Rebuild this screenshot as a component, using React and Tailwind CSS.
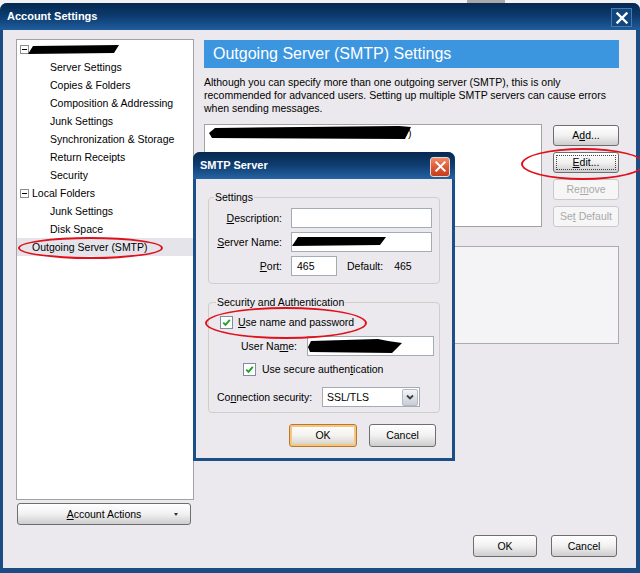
import React from "react"

const treeItems = [
  { label: "Server Settings", level: 2 },
  { label: "Copies & Folders", level: 2 },
  { label: "Composition & Addressing", level: 2 },
  { label: "Junk Settings", level: 2 },
  { label: "Synchronization & Storage", level: 2 },
  { label: "Return Receipts", level: 2 },
  { label: "Security", level: 2 },
  { label: "Local Folders", level: 1, expander: true },
  { label: "Junk Settings", level: 2 },
  { label: "Disk Space", level: 2 },
  { label: "Outgoing Server (SMTP)", level: 1, selected: true },
]

function Minus() {
  return (
    <span className="flex h-[9px] w-[9px] items-center justify-center border border-[#8e8e8e] bg-white">
      <span className="h-px w-[5px] bg-black" />
    </span>
  )
}

function XpButton({ children, className = "", disabled, focused, primary }) {
  let look = "border-[#6e6e6e] bg-gradient-to-b from-white via-[#f1f1f1] to-[#cdcdcd] text-black"
  if (disabled) look = "border-[#cacaca] bg-[#f6f6f6] text-[#a9a9a9]"
  if (primary) look = "border-[#b5782e] bg-gradient-to-b from-white via-[#f3f2ee] to-[#d3d0c6] text-black shadow-[inset_0_0_0_2px_#f6c57e]"
  return (
    <button type="button" className={`relative flex items-center justify-center rounded-[3px] border ${look} ${className}`}>
      {focused && <span className="absolute inset-[2px] border border-dotted border-[#444]" />}
      <span>{children}</span>
    </button>
  )
}

function Field({ className = "", children }) {
  return (
    <div className={`relative h-[20px] border border-[#a3abb3] bg-white ${className}`}>{children}</div>
  )
}

function Check() {
  return (
    <span className="flex h-[13px] w-[13px] items-center justify-center border border-[#7f8e9c] bg-white">
      <svg width="9" height="9" viewBox="0 0 9 9">
        <path d="M1.2 4.6 L3.5 6.9 L7.8 1.8" fill="none" stroke="#21a32a" strokeWidth="1.9" />
      </svg>
    </span>
  )
}

function CloseX({ size = 12, width = 2.4 }) {
  return (
    <svg width={size} height={size} viewBox="0 0 12 12">
      <path d="M1.5 1.5 L10.5 10.5 M10.5 1.5 L1.5 10.5" stroke="#fff" strokeWidth={width} strokeLinecap="square" />
    </svg>
  )
}

function SmtpDialog() {
  return (
    <div className="absolute left-[193px] top-[152px] flex h-[309px] w-[262px] flex-col overflow-hidden rounded-t-[7px] bg-[#1a4f88]">
      <div className="flex h-[27px] items-center justify-between bg-gradient-to-b from-[#07294f] via-[#0f3e72] to-[#2564a3] pl-[7px] pr-[5px]">
        <span className="text-[11px] font-bold text-white">SMTP Server</span>
        <span className="mt-[2px] flex h-[20px] w-[20px] items-center justify-center rounded-[3px] border border-[#f0d6cc] bg-gradient-to-b from-[#f08a68] via-[#dd5a36] to-[#c23d1c]">
          <CloseX size={11} width={2.2} />
        </span>
      </div>
      <div className="flex-1 px-[3px] pb-[3px]">
        <div className="flex h-full flex-col bg-[#ebe9ed] px-[12px]">
          <fieldset className="mt-[12px] rounded-[4px] border border-[#cfcfc9] pb-[7px] pr-[5px]">
            <legend className="ml-[5px] px-[1px] leading-[13px]">Settings</legend>
            <div className="mt-[4px] flex h-[20px] items-center">
              <span className="w-[73px] text-right"><u>D</u>escription:</span>
              <Field className="ml-[9px] w-[141px]" />
            </div>
            <div className="mt-[4px] flex h-[20px] items-center">
              <span className="w-[73px] text-right"><u>S</u>erver Name:</span>
              <Field className="ml-[9px] w-[141px]">
                <svg className="absolute left-0 top-[4px]" width="94" height="10" viewBox="0 0 94 10">
                  <polygon points="6,0 94,0 88,8 0,9" fill="#000" />
                </svg>
              </Field>
            </div>
            <div className="mt-[4px] flex h-[20px] items-center">
              <span className="w-[73px] text-right"><u>P</u>ort:</span>
              <Field className="ml-[9px] flex w-[46px] items-center pl-[5px]">465</Field>
              <span className="ml-[10px]">Default:</span>
              <span className="ml-[11px]">465</span>
            </div>
          </fieldset>
          <fieldset className="mt-[12px] rounded-[4px] border border-[#cfcfc9] pb-[5px] pr-[5px]">
            <legend className="ml-[7px] px-[1px] leading-[13px]">Security and Authentication</legend>
            <div className="mt-[3px] flex h-[20px] items-center pl-[11px]">
              <Check />
              <span className="ml-[5px]"><u>U</u>se name and password</span>
            </div>
            <div className="mt-[4px] flex h-[20px] items-center pl-[32px]">
              <span>User Na<u>m</u>e:</span>
              <Field className="ml-auto w-[127px]">
                <svg className="absolute left-0 top-[1px]" width="94" height="16" viewBox="0 0 94 16">
                  <polygon points="3,3 70,1 80,3 94,5 84,15 2,14 0,9" fill="#000" />
                </svg>
              </Field>
            </div>
            <div className="mt-[3px] flex h-[20px] items-center pl-[34px]">
              <Check />
              <span className="ml-[6px]">Use secure authen<u>t</u>ication</span>
            </div>
            <div className="mt-[8px] flex h-[20px] items-center pl-[8px]">
              <span className="w-[105px] shrink-0">Co<u>n</u>nection security:</span>
              <div className="flex h-[20px] w-[98px] shrink-0 items-center border border-[#a3abb3] bg-white pl-[4px] pr-px">
                <span>SSL/TLS</span>
                <span className="ml-auto flex h-[17px] w-[16px] items-center justify-center rounded-[2px] border border-[#b3bac5] bg-gradient-to-b from-[#f4f5f8] to-[#c9cdd6]">
                  <svg width="8" height="6" viewBox="0 0 8 6">
                    <path d="M1 1.5 L4 4.5 L7 1.5" fill="none" stroke="#3b3f46" strokeWidth="1.8" />
                  </svg>
                </span>
              </div>
            </div>
          </fieldset>
          <div className="mt-[11px] flex justify-end gap-[12px] pr-[4px]">
            <XpButton primary className="h-[23px] w-[68px]">OK</XpButton>
            <XpButton className="h-[23px] w-[67px]">Cancel</XpButton>
          </div>
        </div>
      </div>
    </div>
  )
}

export default function App() {
  return (
    <div className="relative h-[573px] w-[640px] overflow-hidden bg-[#f2f2f2] font-['Liberation_Sans',Arial,sans-serif] text-[10.5px] leading-none text-black">
      <div className="absolute left-[467px] top-0 h-[3px] w-[38px] bg-[#a9a9a9]" />
      <div className="mt-[3px] flex h-[570px] flex-col overflow-hidden rounded-t-[7px] bg-[#1b4d84]">
        <div className="flex h-[27px] items-center justify-between bg-gradient-to-b from-[#05284f] via-[#0d3c70] to-[#1f5e9d] pl-[7px] pr-[8px]">
          <span className="text-[11px] font-bold text-white">Account Settings</span>
          <span className="mt-[2px] flex h-[19px] w-[21px] items-center justify-center border border-[#4a79ad] bg-[#12467f]">
            <CloseX size={12} width={2.4} />
          </span>
        </div>
        <div className="mb-[5px] ml-[3px] mr-[4px] flex flex-1 bg-[#ebe9ed] pb-[11px] pl-[13px] pr-[17px] pt-[9px]">
          <div className="flex w-[178px] flex-col">
            <div className="h-[461px] border border-[#a2a2a2] bg-white">
              <div className="flex h-[18px] items-center pl-[3px]">
                <Minus />
                <svg className="ml-[-1px]" width="91" height="9" viewBox="0 0 91 9">
                  <polygon points="5,1 91,0 86,8 0,9" fill="#000" />
                </svg>
              </div>
              {treeItems.map((item, i) => (
                <div
                  key={i}
                  className={`flex h-[18px] items-center ${item.selected ? "bg-[#e4e4ea]" : ""} ${item.level === 2 ? "pl-[33px]" : item.expander ? "pl-[3px]" : "pl-[15px]"}`}
                >
                  {item.expander && <span className="mr-[3px]"><Minus /></span>}
                  <span>{item.label}</span>
                </div>
              ))}
            </div>
            <XpButton className="ml-[1px] mt-[3px] h-[22px] w-[174px]">
              <u>A</u>ccount Actions
              <span className="absolute right-[12px] top-[9px] h-0 w-0 border-x-[2px] border-t-[3px] border-x-transparent border-t-[#333]" />
            </XpButton>
          </div>
          <div className="ml-[10px] flex flex-1 flex-col">
            <div className="mt-[1px] flex h-[28px] items-center bg-[#3c95df] pl-[9px] text-[16px] text-white">
              Outgoing Server (SMTP) Settings
            </div>
            <p className="mt-[8px] whitespace-nowrap leading-[13px]">
              Although you can specify more than one outgoing server (SMTP), this is only
              <br />
              recommended for advanced users. Setting up multiple SMTP servers can cause errors
              <br />
              when sending messages.
            </p>
            <div className="mt-[9px] flex">
              <div className="h-[103px] w-[338px] border border-[#a2a2a2] bg-white pl-[4px] pt-[1px]">
                <div className="flex items-center">
                  <svg width="202" height="14" viewBox="0 0 202 14">
                    <polygon points="6,2 190,0 202,1 196,13 3,12 0,7" fill="#000" />
                  </svg>
                  <span className="-ml-[3px]">)</span>
                </div>
              </div>
              <div className="ml-auto flex w-[66px] flex-col gap-[6px] pt-px">
                <XpButton className="h-[21px]">A<u>d</u>d...</XpButton>
                <XpButton focused className="h-[21px]"><u>E</u>dit...</XpButton>
                <XpButton disabled className="h-[21px]">Re<u>m</u>ove</XpButton>
                <XpButton disabled className="h-[21px]">Se<u>t</u> Default</XpButton>
              </div>
            </div>
            <div className="mt-[19px] h-[98px] border border-[#acacac] bg-[#f4f4f6]" />
            <div className="mt-auto flex justify-end gap-[14px] pr-[2px]">
              <XpButton className="h-[22px] w-[64px]">OK</XpButton>
              <XpButton className="h-[22px] w-[66px]">Cancel</XpButton>
            </div>
          </div>
        </div>
      </div>

      <SmtpDialog />

      <div className="absolute left-[18px] top-[237px] h-[22px] w-[145px] rounded-[50%] border-2 border-[#e0101c]" />
      <div className="absolute left-[521px] top-[148px] h-[32px] w-[124px] rounded-[50%] border-2 border-[#e0101c]" />
      <div className="absolute left-[205px] top-[307px] h-[32px] w-[162px] rounded-[50%] border-2 border-[#e0101c]" />
    </div>
  )
}
